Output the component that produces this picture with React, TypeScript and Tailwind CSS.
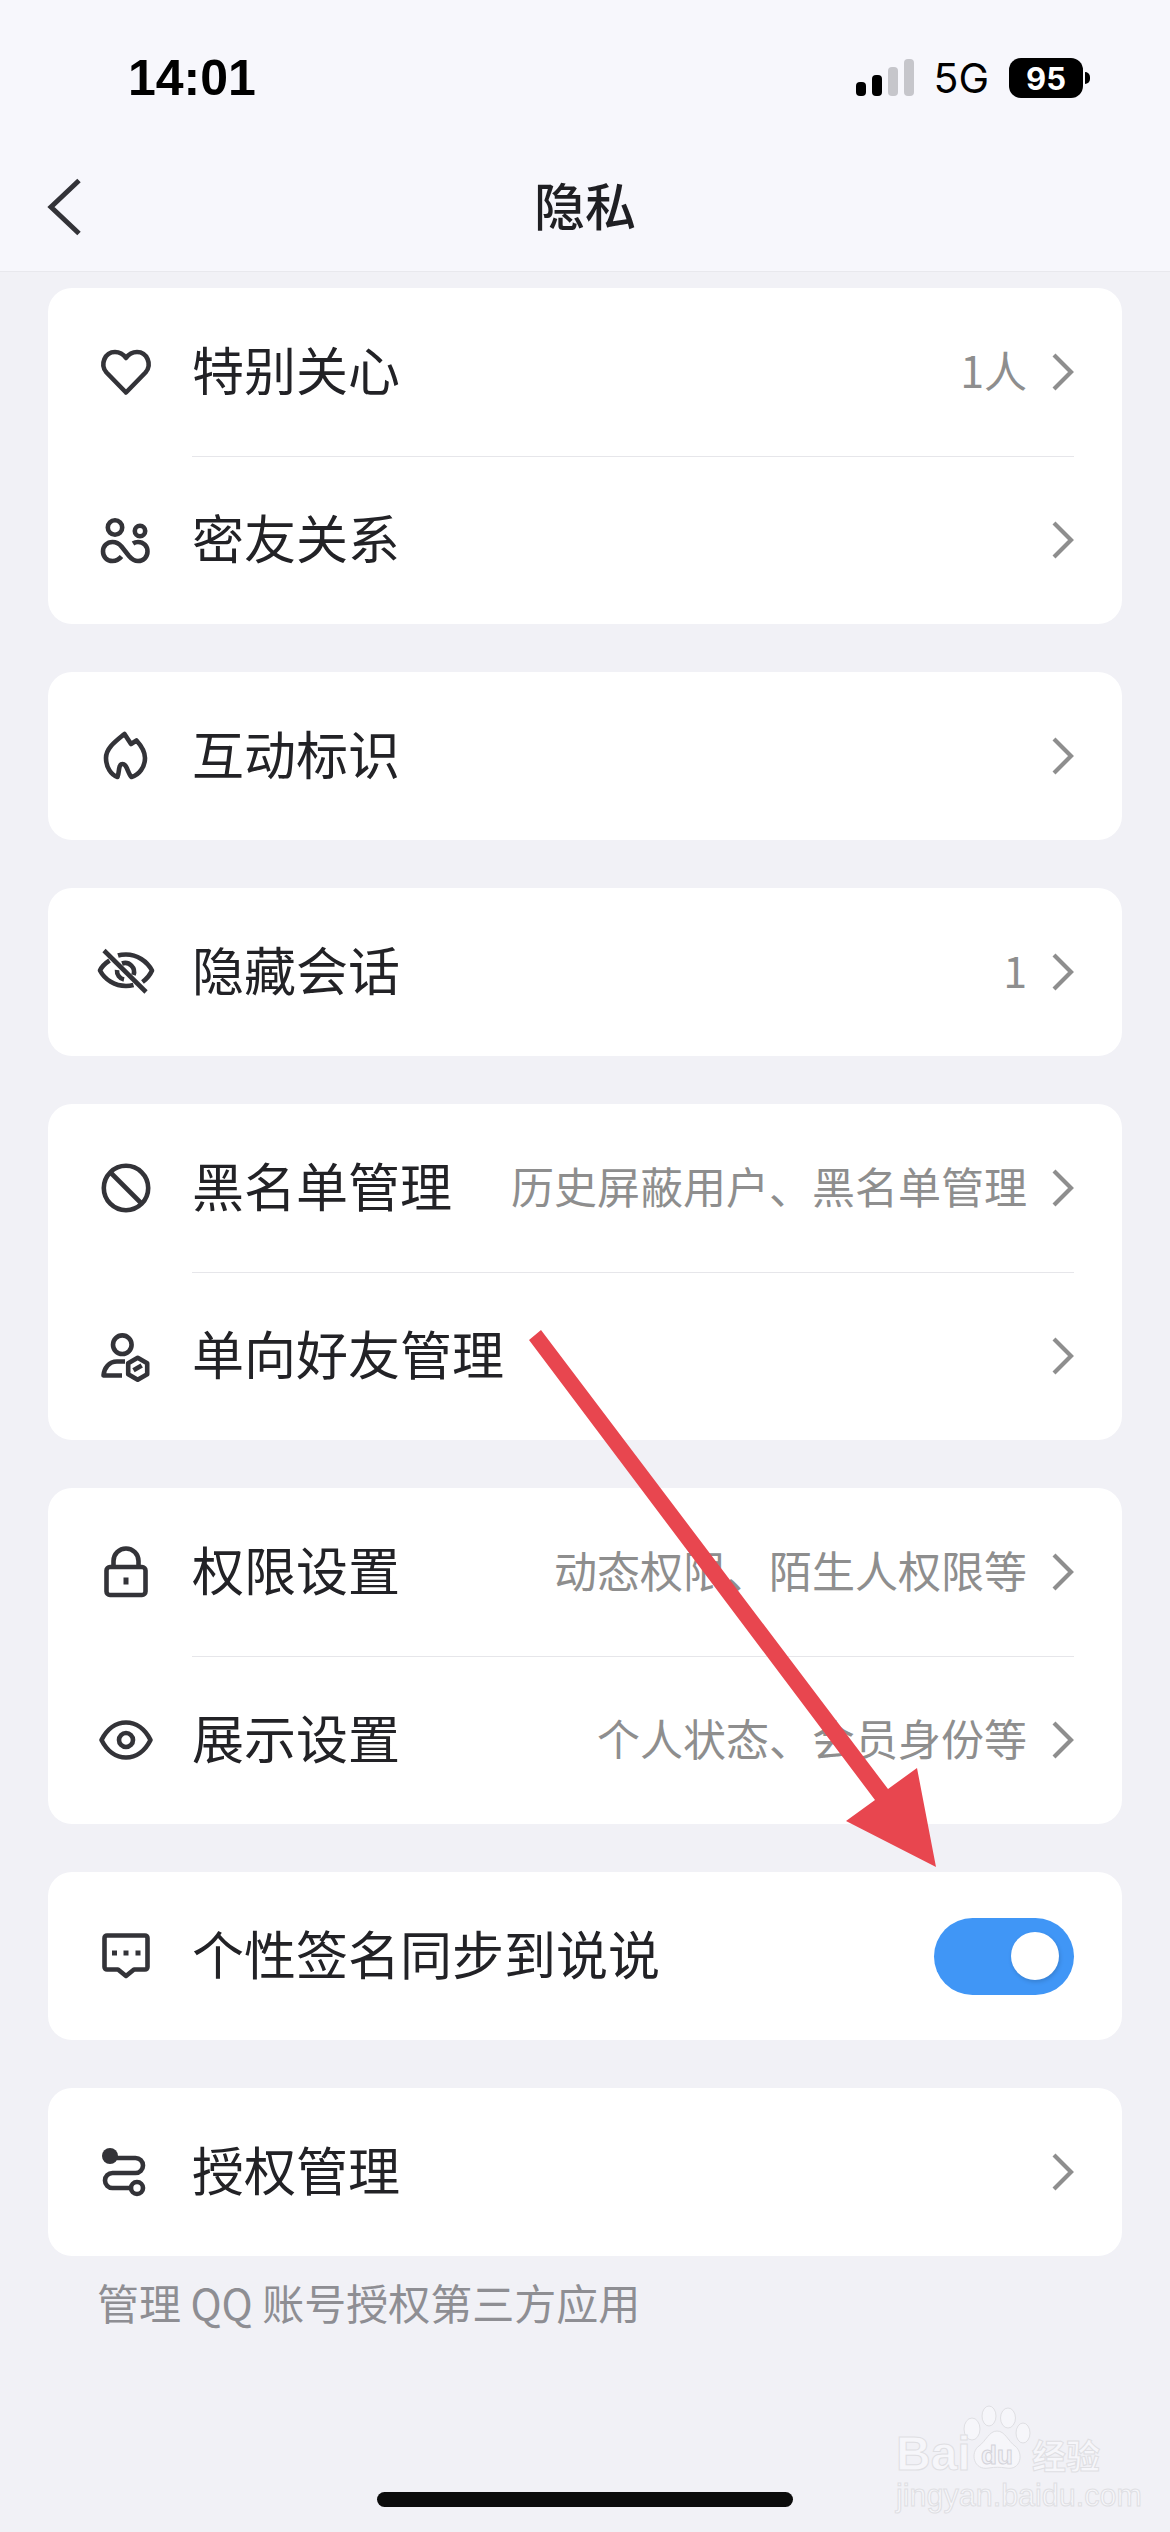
import type { ReactNode } from "react";

const cjk = "font-['Noto_Sans_CJK_SC','Noto_Sans',sans-serif]";

function Icon({ children }: { children: ReactNode }) {
  return (
    <svg width="60" height="60" viewBox="0 0 60 60" fill="none" stroke="#333338" strokeWidth="4.6" strokeLinecap="butt" strokeLinejoin="round" className="shrink-0">
      {children}
    </svg>
  );
}

const HeartIcon = () => (
  <Icon>
    <path d="M30 50.5 L10.5 30.5 C3.5 22.5 9 10 19 10 C23.5 10 27.5 12.5 30 16 C32.5 12.5 36.5 10 41 10 C51 10 56.5 22.5 49.5 30.5 Z" />
  </Icon>
);

const FriendsIcon = () => (
  <Icon>
    <circle cx="19" cy="17.5" r="7.2" />
    <circle cx="44" cy="21" r="5.2" />
    <path d="M25.5 46.5 C23 49.5 20 51 16.5 51 C11 51 7 47 7 41.5 C7 36 11 32 16.5 32 C20.5 32 23 33.5 25.5 36.5 L33 46 C35.5 49 38 51 42 51 C47.5 51 51.5 47 51.5 41.5 C51.5 36 47.5 32 42 32 C40 32 38.5 32.5 37 33.5" />
  </Icon>
);

const FlameIcon = () => (
  <Icon>
    <path d="M28.5 8 L35 18 L40.5 14.5 C45.5 20 49 26 49 32 C49 41 43 49 35.5 51 C32 48 31 38 26.5 38 C22 38 23.5 47 21.5 51 C15 49 10 41 10 32 C10 22 20 15 28.5 8 Z" />
  </Icon>
);

const EyeOffIcon = () => (
  <Icon>
    <path d="M8 8.5 L50 50" />
    <path d="M13.5 18.5 C9 21.5 5.5 25 4 28.5 C9 38 19 44 30 44 C33 44 35 43.7 37.5 43" />
    <path d="M22 13.5 C24.5 12.7 27 12.5 30 12.5 C41 12.5 51 19 56 28.5 C54 33 50.5 37 46.5 40" />
    <path d="M26 21.5 A9 9 0 0 1 37.5 33" />
    <path d="M21 28 A9 9 0 0 0 28 37.5" />
  </Icon>
);

const BanIcon = () => (
  <Icon>
    <circle cx="30" cy="30" r="22.2" />
    <path d="M14.5 14.5 L45.5 45.5" />
  </Icon>
);

const PersonHexIcon = () => (
  <Icon>
    <circle cx="26.3" cy="18.7" r="9.3" />
    <path d="M29 35.5 L21 35.5 C13 35.5 8 42 7.5 49.5 L26 49.5" />
    <path d="M41.7 31.7 L51.2 37.2 L51.2 48.2 L41.7 53.7 L32.2 48.2 L32.2 37.2 Z" />
    <path d="M37.5 44.3 L45.7 39.5" />
  </Icon>
);

const LockIcon = () => (
  <Icon>
    <rect x="10.5" y="25" width="39" height="28" rx="3.5" />
    <path d="M17.5 25 V19 A12.5 12.5 0 0 1 42.5 19 V25" />
    <rect x="27.5" y="35.5" width="5" height="7" fill="#333338" stroke="none" />
  </Icon>
);

const EyeIcon = () => (
  <Icon>
    <path d="M5.5 30 C11 19 20 12.5 30 12.5 C40 12.5 49 19 54.5 30 C49 41 40 47.5 30 47.5 C20 47.5 11 41 5.5 30 Z" />
    <circle cx="30" cy="30" r="7" />
  </Icon>
);

const ChatIcon = () => (
  <Icon>
    <path d="M11 9.5 H49 A2.5 2.5 0 0 1 51.5 12 V41 A2.5 2.5 0 0 1 49 43.5 H38 L30 50 L22 43.5 H11 A2.5 2.5 0 0 1 8.5 41 V12 A2.5 2.5 0 0 1 11 9.5 Z" />
    <rect x="16" y="24.5" width="5" height="5" fill="#333338" stroke="none" />
    <rect x="27.5" y="24.5" width="5" height="5" fill="#333338" stroke="none" />
    <rect x="39.5" y="24.5" width="5" height="5" fill="#333338" stroke="none" />
  </Icon>
);

const AuthIcon = () => (
  <Icon>
    <path d="M14 16 H39.5 A7.5 7.5 0 0 1 39.5 31 H16.5 A7.5 7.5 0 0 0 16.5 46 H35" />
    <circle cx="14" cy="14" r="8" fill="#333338" stroke="none" />
    <circle cx="41" cy="46" r="6" />
  </Icon>
);

function Chevron() {
  return (
    <svg width="24" height="40" viewBox="0 0 24 40" fill="none" stroke="#8e8e8e" strokeWidth="4.2" className="ml-[23px] shrink-0">
      <path d="M4 3 L21 20 L4 37" />
    </svg>
  );
}

function Row({ icon, label, hint, right }: { icon: ReactNode; label: string; hint?: string; right?: ReactNode }) {
  return (
    <div className="flex h-[168px] items-center pl-12 pr-[48px]">
      {icon}
      <span className="mb-[6px] ml-9 text-[52px] leading-none text-[#222226]">{label}</span>
      <div className="ml-auto flex items-center">
        {hint && <span className="mb-[5px] text-[43px] leading-none text-[#8e8e8e]">{hint}</span>}
        {right ?? <Chevron />}
      </div>
    </div>
  );
}

function Card({ children }: { children: ReactNode }) {
  return <div className="flex flex-col rounded-[24px] bg-white">{children}</div>;
}

function Divider() {
  return <div className="relative -mb-px ml-[144px] mr-[48px] h-px bg-[#e6e6ea]" />;
}

function Toggle() {
  return (
    <div className="flex h-[77px] w-[140px] items-center justify-end rounded-full bg-[#4096f6] pr-[15px]">
      <div className="h-12 w-12 rounded-full bg-white shadow-[1px_2px_4px_rgba(0,0,0,0.15)]" />
    </div>
  );
}

function StatusBar() {
  return (
    <div className="flex h-[156px] items-center pl-[128px] pr-[80px]">
      <span className="font-['Liberation_Sans',sans-serif] text-[50px] font-bold leading-none text-black">14:01</span>
      <div className="ml-auto flex items-center">
        <svg width="58" height="38" viewBox="0 0 58 38" className="shrink-0">
          <rect x="0" y="23" width="10" height="14" rx="4" fill="#000" />
          <rect x="16" y="16" width="10" height="21" rx="4" fill="#000" />
          <rect x="32" y="8" width="10" height="29" rx="4" fill="#c6c6cb" />
          <rect x="48" y="0" width="10" height="37" rx="4" fill="#c6c6cb" />
        </svg>
        <span className="ml-[19px] font-['Inter',sans-serif] text-[41px] leading-none text-black">5G</span>
        <div className="ml-[20px] flex h-10 w-[74px] items-center justify-center rounded-[12px] bg-black font-['Inter',sans-serif] text-[31px] font-bold leading-none text-white">95</div>
        <div className="ml-[2px] h-[12px] w-[5px] rounded-r-full bg-black" />
      </div>
    </div>
  );
}

function Watermark() {
  return (
    <div className="pointer-events-none absolute left-[896px] top-[2405px] h-[106px] w-[212px] font-['Liberation_Sans',sans-serif] text-[#f6f6fa]">
      <svg width="72" height="68" viewBox="0 0 72 68" className="absolute left-[66px] top-0" fill="#f6f6fa" stroke="#dfdfe3" strokeWidth="1">
        <ellipse cx="10" cy="24" rx="8" ry="11" />
        <ellipse cx="27" cy="11" rx="7" ry="10" />
        <ellipse cx="46" cy="13" rx="7.5" ry="10" />
        <ellipse cx="61" cy="28" rx="7" ry="10" />
        <path d="M35 26 C27 26 24 36 17 41 C8 47 11 66 27 63 C33 62 38 62 44 63 C59 66 62 48 53 41 C46 36 43 26 35 26 Z" />
      </svg>
      <span className="absolute left-0 top-[25px] text-[48px] font-bold leading-none [-webkit-text-stroke:1px_#dfdfe3]">Bai</span>
      <span className="absolute left-[85px] top-[37px] text-[26px] font-bold leading-none text-[#f1f1f6] [-webkit-text-stroke:1px_#d4d4da]">du</span>
      <span className={`absolute left-[136px] top-[33px] text-[34px] font-bold leading-none [-webkit-text-stroke:1px_#dfdfe3] ${cjk}`}>经验</span>
      <span className="absolute left-0 top-[75px] font-['Liberation_Sans',sans-serif] text-[30.5px] leading-none [-webkit-text-stroke:1px_#dfdfe3]">jingyan.baidu.com</span>
    </div>
  );
}

export default function App() {
  return (
    <div className={`relative flex h-[2532px] w-[1170px] flex-col overflow-hidden bg-[#f1f1f6] ${cjk}`}>
      <header className="h-[272px] shrink-0 border-b border-[#e8e8ed] bg-[#f7f7fc]">
        <StatusBar />
        <div className="grid h-[102px] grid-cols-[1fr_auto_1fr] items-center">
          <svg width="36" height="60" viewBox="0 0 36 60" fill="none" stroke="#333338" strokeWidth="5" className="ml-[46px]">
            <path d="M33 3.5 L5 30 L33 56.5" />
          </svg>
          <h1 className="mb-[6px] text-[51px] font-medium leading-none text-[#1f1f23]">隐私</h1>
        </div>
      </header>

      <main className="flex flex-col gap-12 px-12 pt-4">
        <Card>
          <Row icon={<HeartIcon />} label="特别关心" hint="1人" />
          <Divider />
          <Row icon={<FriendsIcon />} label="密友关系" />
        </Card>
        <Card>
          <Row icon={<FlameIcon />} label="互动标识" />
        </Card>
        <Card>
          <Row icon={<EyeOffIcon />} label="隐藏会话" hint="1" />
        </Card>
        <Card>
          <Row icon={<BanIcon />} label="黑名单管理" hint="历史屏蔽用户、黑名单管理" />
          <Divider />
          <Row icon={<PersonHexIcon />} label="单向好友管理" />
        </Card>
        <Card>
          <Row icon={<LockIcon />} label="权限设置" hint="动态权限、陌生人权限等" />
          <Divider />
          <Row icon={<EyeIcon />} label="展示设置" hint="个人状态、会员身份等" />
        </Card>
        <Card>
          <Row icon={<ChatIcon />} label="个性签名同步到说说" right={<Toggle />} />
        </Card>
        <Card>
          <Row icon={<AuthIcon />} label="授权管理" />
        </Card>
      </main>

      <p className="ml-[97px] mt-[20px] text-[42px] leading-[52px] text-[#8e8e93]">管理 QQ 账号授权第三方应用</p>

      <div className="mx-auto mb-[25px] mt-auto h-[15px] w-[416px] rounded-full bg-[#0c0c0c]" />

      <Watermark />

      {/* annotation arrow drawn over the screenshot */}
      <svg width="1170" height="2532" viewBox="0 0 1170 2532" className="pointer-events-none absolute left-0 top-0">
        <polygon points="529,1340 541,1330 888,1789 917,1768 936,1867 846,1821 875,1800" fill="#e8464f" />
      </svg>
    </div>
  );
}
